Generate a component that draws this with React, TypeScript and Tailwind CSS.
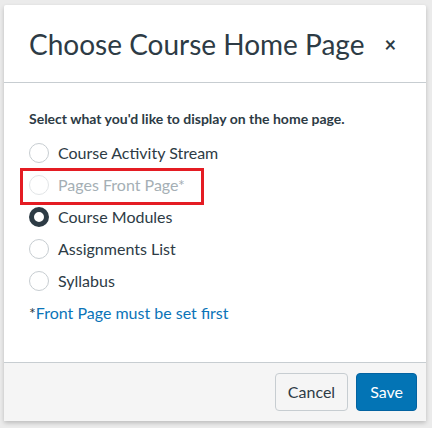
import { useState } from "react";

const options = [
  { id: "feed", label: "Course Activity Stream" },
  { id: "wiki", label: "Pages Front Page*", disabled: true },
  { id: "modules", label: "Course Modules" },
  { id: "assignments", label: "Assignments List" },
  { id: "syllabus", label: "Syllabus" },
];

const Radio = ({ checked, disabled }: { checked: boolean; disabled?: boolean }) => {
  if (checked) {
    return <span className="block w-[20px] h-[20px] rounded-full border-[5px] border-[#2d3b45] bg-white" />;
  }
  return (
    <span
      className={
        "block w-[20px] h-[20px] rounded-full border bg-white " +
        (disabled ? "border-[#e2e5e7]" : "border-[#c7cdd1]")
      }
    />
  );
};

export default function App() {
  const [selected, setSelected] = useState("modules");

  return (
    <div
      className="w-[432px] h-[428px] bg-[#ebebeb] pl-[4px] pt-[5px] overflow-hidden"
      style={{ fontFamily: "Lato, 'Noto Sans', sans-serif" }}
    >
      <div className="w-[422px] h-[416px] bg-white flex flex-col shadow-[0_2px_4px_rgba(0,0,0,0.2)] rounded-[2px] text-[#2d3b45]">
        {/* header */}
        <div className="h-[78px] border-b border-[#c7cdd1] flex items-center justify-between pl-[25px] pr-[30px]">
          <h2 className="text-[28px] leading-none font-normal">Choose Course Home Page</h2>
          <button className="text-[20px] leading-none font-bold">×</button>
        </div>

        {/* body */}
        <div className="flex-1 pl-[25px] pt-[28px]">
          <p className="text-[14px] font-bold leading-[16px] mb-[10px]">
            Select what you'd like to display on the home page.
          </p>
          <div className="flex flex-col">
            {options.map((o) => (
              <div key={o.id} className="relative">
                {o.disabled && (
                  <div className="absolute left-[-9px] top-[-1px] w-[184px] h-[37px] border-[3px] border-[#e41c23]" />
                )}
                <label
                  className={
                    "flex items-center gap-[9px] h-[32px] text-[16px] " +
                    (o.disabled ? "text-[#a5afb5]" : "cursor-pointer")
                  }
                  onClick={() => !o.disabled && setSelected(o.id)}
                >
                  <Radio checked={selected === o.id} disabled={o.disabled} />
                  <span>{o.label}</span>
                </label>
              </div>
            ))}
          </div>
          <p className="text-[16px] leading-[20px] mt-[6px]">
            <span className="text-[#2d3b45]">*</span>
            <span className="text-[#0b74b8]">Front Page must be set first</span>
          </p>
        </div>

        {/* footer */}
        <div className="h-[59px] border-t border-[#c7cdd1] bg-[#f5f5f5] flex items-center justify-end gap-[8px] pr-[9px]">
          <button className="h-[38px] px-[12px] rounded-[4px] border border-[#c7cdd1] bg-[#f5f5f5] text-[16px] text-[#2d3b45]">
            Cancel
          </button>
          <button className="h-[38px] px-[13px] rounded-[4px] border border-[#0363a1] bg-[#0374b5] text-[16px] text-white">
            Save
          </button>
        </div>
      </div>
    </div>
  );
}
